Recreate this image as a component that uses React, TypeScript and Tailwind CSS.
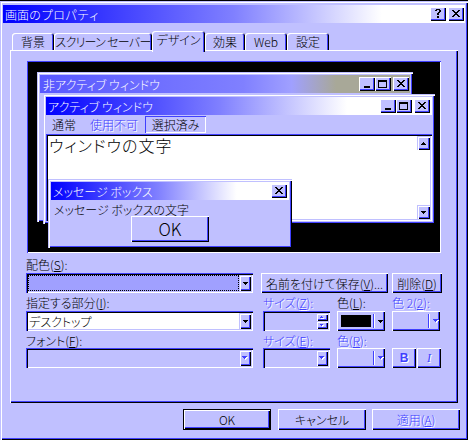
import React from "react";

const raised = "shadow-[inset_1px_1px_#fff,inset_-1px_-1px_#000,inset_-2px_-2px_#4040ff]";
const frame = "shadow-[inset_1px_1px_#c0c0ff,inset_2px_2px_#fff,inset_-1px_-1px_#000,inset_-2px_-2px_#4040ff]";
const sunken = "shadow-[inset_1px_1px_#4040ff,inset_2px_2px_#000,inset_-1px_-1px_#fff,inset_-2px_-2px_#c0c0ff]";
const defBtn = "shadow-[inset_0_0_0_1px_#000,inset_2px_2px_#fff,inset_-2px_-2px_#000,inset_-3px_-3px_#4040ff]";
const dis = "text-[#4040ff] [text-shadow:1px_1px_0_#fff]";
const activeGrad = "bg-[linear-gradient(90deg,#0000ff_0%,#8080ff_50%,#ffffff_82%)]";
const activeGrad2 = "bg-[linear-gradient(90deg,#0000ff_0%,#8080ff_45%,#ffffff_78%)]";
const inactiveGrad = "bg-[linear-gradient(90deg,#5858ff_0%,#8080ff_55%,#a0a0ff_68%,#a8a898_80%)]";

type PixProps = { rows: string[]; color?: string; shadow?: string; className?: string };
function Pix({ rows, color = "#000", shadow, className }: PixProps) {
  const w = rows[0].length;
  const h = rows.length;
  const rects: React.ReactElement[] = [];
  if (shadow) {
    rows.forEach((r, y) =>
      [...r].forEach((c, x) => {
        if (c === "#") rects.push(<rect key={`s${x}-${y}`} x={x + 1} y={y + 1} width={1} height={1} fill={shadow} />);
      })
    );
  }
  rows.forEach((r, y) =>
    [...r].forEach((c, x) => {
      if (c === "#") rects.push(<rect key={`p${x}-${y}`} x={x} y={y} width={1} height={1} fill={color} />);
    })
  );
  return (
    <svg className={className} width={w + (shadow ? 1 : 0)} height={h + (shadow ? 1 : 0)} shapeRendering="crispEdges">
      {rects}
    </svg>
  );
}

const CLOSE = ["##....##", ".##..##.", "..####..", "...##...", "..####..", ".##..##.", "##....##"];
const MIN = ["......", "......", "......", "......", "......", "......", "######", "######"];
const MAX = ["#########", "#########", "#.......#", "#.......#", "#.......#", "#.......#", "#.......#", "#########"];
const HELP = [".####.", "##..##", "....##", "...##.", "..##..", "..##..", "......", "..##..", "..##.."];
const DOWN = ["#####", ".###.", "..#.."];
const UP = ["..#..", ".###.", "#####"];
const TUP = [".#.", "###"];
const TDOWN = ["###", ".#."];

function CapBtn({ children, className = "" }: { children: React.ReactNode; className?: string }) {
  return (
    <div className={`w-[16px] h-[14px] shrink-0 bg-[#c0c0ff] ${raised} flex items-center justify-center pr-px pb-px ${className}`}>
      {children}
    </div>
  );
}

function Tab({ children, className = "", selected = false }: { children: React.ReactNode; className?: string; selected?: boolean }) {
  if (selected) {
    return (
      <div
        className={`h-[21px] -mb-[2px] bg-[#c0c0ff] rounded-t-[3px] shadow-[inset_1px_1px_#fff,inset_-1px_0_#000,inset_-2px_0_#4040ff] flex justify-center pt-[2px] whitespace-nowrap ${className}`}
      >
        {children}
      </div>
    );
  }
  return (
    <div
      className={`h-[17px] bg-[#c0c0ff] rounded-t-[3px] shadow-[inset_1px_1px_#fff,inset_-1px_0_#000,inset_-2px_0_#4040ff] flex justify-center pt-[2px] whitespace-nowrap ${className}`}
    >
      {children}
    </div>
  );
}

function Btn({ children, className = "", def = false }: { children: React.ReactNode; className?: string; def?: boolean }) {
  return (
    <div className={`bg-[#c0c0ff] ${def ? defBtn : raised} flex items-center justify-center ${className}`}>{children}</div>
  );
}

function DropBtn({ disabled = false }: { disabled?: boolean }) {
  return (
    <div className={`w-[12px] shrink-0 bg-[#c0c0ff] ${frame} flex items-center justify-center`}>
      <Pix rows={DOWN} color={disabled ? "#4040ff" : "#000"} shadow={disabled ? "#fff" : undefined} />
    </div>
  );
}

function Combo({
  className = "",
  field = "",
  disabled = false,
  children,
}: {
  className?: string;
  field?: string;
  disabled?: boolean;
  children?: React.ReactNode;
}) {
  return (
    <div className={`h-[20px] ${sunken} p-[2px] flex ${className}`}>
      <div className={`flex-1 flex items-center ${field}`}>{children}</div>
      <DropBtn disabled={disabled} />
    </div>
  );
}

function Spin({ className = "" }: { className?: string }) {
  return (
    <div className={`h-[20px] bg-[#c0c0ff] ${sunken} p-[2px] flex justify-end ${className}`}>
      <div className="w-[12px] flex flex-col">
        <div className={`h-[8px] bg-[#c0c0ff] ${frame} flex items-center justify-center`}>
          <Pix rows={TUP} color="#4040ff" shadow="#fff" />
        </div>
        <div className={`h-[8px] bg-[#c0c0ff] ${frame} flex items-center justify-center`}>
          <Pix rows={TDOWN} color="#4040ff" shadow="#fff" />
        </div>
      </div>
    </div>
  );
}

function ColorBtn({ className = "", swatch = false, disabled = false }: { className?: string; swatch?: boolean; disabled?: boolean }) {
  return (
    <div className={`w-[48px] h-[20px] bg-[#c0c0ff] ${raised} flex items-center pl-[4px] ${className}`}>
      <div className={`w-[30px] h-[12px] ${swatch ? "bg-black" : ""}`} />
      <div className="ml-[2px] w-[2px] h-[14px] border-l border-l-[#4040ff] border-r border-r-white" />
      <div className="ml-[3px]">
        <Pix rows={DOWN} color={disabled ? "#4040ff" : "#000"} shadow={disabled ? "#fff" : undefined} />
      </div>
    </div>
  );
}

export default function App() {
  return (
    <div className="w-[468px] h-[440px] bg-black pt-px font-['Noto_Sans_CJK_JP','Noto_Sans',sans-serif] font-light [font-feature-settings:'palt'] text-[12px] leading-[13px] text-black">
      <div className={`h-[439px] bg-[#c0c0ff] ${frame} pt-[4px] px-[3px] flex flex-col`}>
        {/* title bar */}
        <div className={`h-[18px] shrink-0 flex items-center ${activeGrad} pl-[2px] pr-[1px]`}>
          <span className="flex-1 text-white [font-feature-settings:normal]">画面のプロパティ</span>
          <CapBtn>
            <Pix rows={HELP} />
          </CapBtn>
          <CapBtn className="ml-[2px]">
            <Pix rows={CLOSE} />
          </CapBtn>
        </div>

        {/* tabs */}
        <div className="relative z-10 mt-[8px] ml-[9px] h-[19px] shrink-0 flex items-end">
          <Tab className="w-[42px]">背景</Tab>
          <Tab className="w-[98px] tracking-[-0.7px]">スクリーン セーバー</Tab>
          <Tab className="w-[53px]" selected>
            デザイン
          </Tab>
          <Tab className="w-[40px]">効果</Tab>
          <Tab className="w-[42px]">Web</Tab>
          <Tab className="w-[42px]">設定</Tab>
        </div>

        {/* panel */}
        <div className={`ml-[7px] w-[448px] h-[353px] shrink-0 ${raised} flex flex-col pl-[16px] pt-[11px]`}>
          {/* preview */}
          <div className="ml-[1px] w-[414px] h-[192px] shrink-0 bg-black relative shadow-[inset_1px_1px_#4040ff,inset_-1px_-1px_#fff]">
            {/* inactive window */}
            <div className={`absolute left-[10px] top-[11px] w-[376px] h-[150px] bg-[#c0c0ff] ${frame} p-[3px]`}>
              <div className={`h-[18px] flex items-center ${inactiveGrad} pl-[3px] pr-[1px]`}>
                <span className="flex-1 text-white">非アクティブ ウィンドウ</span>
                <CapBtn>
                  <Pix rows={MIN} />
                </CapBtn>
                <CapBtn>
                  <Pix rows={MAX} />
                </CapBtn>
                <CapBtn className="ml-[2px]">
                  <Pix rows={CLOSE} />
                </CapBtn>
              </div>
            </div>

            {/* active window */}
            <div className={`absolute left-[16px] top-[33px] w-[392px] h-[130px] bg-[#c0c0ff] ${frame} p-[3px] flex flex-col`}>
              <div className={`h-[18px] shrink-0 flex items-center ${activeGrad2} pl-[2px] pr-[2px]`}>
                <span className="flex-1 text-white">アクティブ ウィンドウ</span>
                <CapBtn>
                  <Pix rows={MIN} />
                </CapBtn>
                <CapBtn>
                  <Pix rows={MAX} />
                </CapBtn>
                <CapBtn className="ml-[2px]">
                  <Pix rows={CLOSE} />
                </CapBtn>
              </div>
              <div className="h-[19px] shrink-0 flex items-center">
                <span className="ml-[6px] w-[24px]">通常</span>
                <span className={`ml-[14px] w-[48px] ${dis}`}>使用不可</span>
                <span className="ml-[7px] w-[61px] h-[17px] flex items-center justify-center shadow-[inset_1px_1px_#4040ff,inset_-1px_-1px_#fff]">
                  選択済み
                </span>
              </div>
              <div className={`flex-1 bg-white ${sunken} relative pl-[3px] pt-[2px]`}>
                <div className="text-[16px] leading-[18px] tracking-[1px]">ウィンドウの文字</div>
                <div className="absolute right-[2px] top-[2px] bottom-[2px] w-[13px] flex flex-col justify-between">
                  <div className={`h-[14px] bg-[#c0c0ff] ${frame} flex items-center justify-center`}>
                    <Pix rows={UP} />
                  </div>
                  <div className={`h-[14px] bg-[#c0c0ff] ${frame} flex items-center justify-center`}>
                    <Pix rows={DOWN} />
                  </div>
                </div>
              </div>
            </div>

            {/* message box */}
            <div className={`absolute left-[21px] top-[118px] w-[244px] h-[69px] bg-[#c0c0ff] ${frame} p-[3px] flex flex-col`}>
              <div className={`h-[18px] shrink-0 flex items-center ${activeGrad2} pl-[2px] pr-[2px]`}>
                <span className="flex-1 text-white">メッセージ ボックス</span>
                <CapBtn>
                  <Pix rows={CLOSE} />
                </CapBtn>
              </div>
              <div className="h-[16px] shrink-0 pl-[3px] pt-[3px]">メッセージ ボックスの文字</div>
              <div className="flex justify-center">
                <Btn className="w-[78px] h-[26px] text-[17px] leading-[18px]">OK</Btn>
              </div>
            </div>
          </div>

          {/* row 1 */}
          <div className="mt-[5px] h-[13px]">
            配色(<u>S</u>):
          </div>
          <div className="mt-[2px] flex h-[20px]">
            <Combo className="w-[227px] bg-white" field="bg-[#a0a0ff] border border-dotted border-black" />
            <Btn className="ml-[8px] w-[127px] h-[20px]">
              名前を付けて保存(<u>V</u>)...
            </Btn>
            <Btn className="ml-[4px] w-[50px] h-[20px]">
              削除(<u>D</u>)
            </Btn>
          </div>

          {/* row 2 */}
          <div className="mt-[3px] h-[13px] flex">
            <span className="w-[237px]">
              指定する部分(<u>I</u>):
            </span>
            <span className={`w-[74px] ${dis}`}>
              サイズ(<u>Z</u>):
            </span>
            <span className="w-[55px]">
              色(<u>L</u>):
            </span>
            <span className={dis}>
              色 2(<u>2</u>):
            </span>
          </div>
          <div className="mt-[2px] flex h-[20px]">
            <Combo className="w-[227px] bg-white">
              <span className="pl-[1px]">デスクトップ</span>
            </Combo>
            <Spin className="ml-[10px] w-[67px]" />
            <ColorBtn className="ml-[7px]" swatch />
            <ColorBtn className="ml-[7px]" disabled />
          </div>

          {/* row 3 */}
          <div className="mt-[3px] h-[13px] flex">
            <span className="w-[237px]">
              フォント(<u>F</u>):
            </span>
            <span className={`w-[74px] ${dis}`}>
              サイズ(<u>E</u>):
            </span>
            <span className={dis}>
              色(<u>R</u>):
            </span>
          </div>
          <div className="mt-px flex h-[20px]">
            <Combo className="w-[227px] bg-[#c0c0ff]" disabled />
            <Combo className="ml-[10px] w-[67px] bg-[#c0c0ff]" disabled />
            <ColorBtn className="ml-[7px]" disabled />
            <Btn className={`ml-[7px] w-[24px] h-[20px] font-bold ${dis} font-['Liberation_Sans',sans-serif]`}>B</Btn>
            <Btn className={`ml-px w-[24px] h-[20px] italic ${dis} font-['Liberation_Serif',serif]`}>I</Btn>
          </div>
        </div>

        {/* bottom buttons */}
        <div className="mt-[6px] ml-[180px] flex">
          <Btn def className="w-[88px] h-[21px]">
            OK
          </Btn>
          <Btn className="ml-[7px] w-[88px] h-[21px]">キャンセル</Btn>
          <Btn className={`ml-[6px] w-[88px] h-[21px] ${dis}`}>
            適用(<u>A</u>)
          </Btn>
        </div>
      </div>
    </div>
  );
}
